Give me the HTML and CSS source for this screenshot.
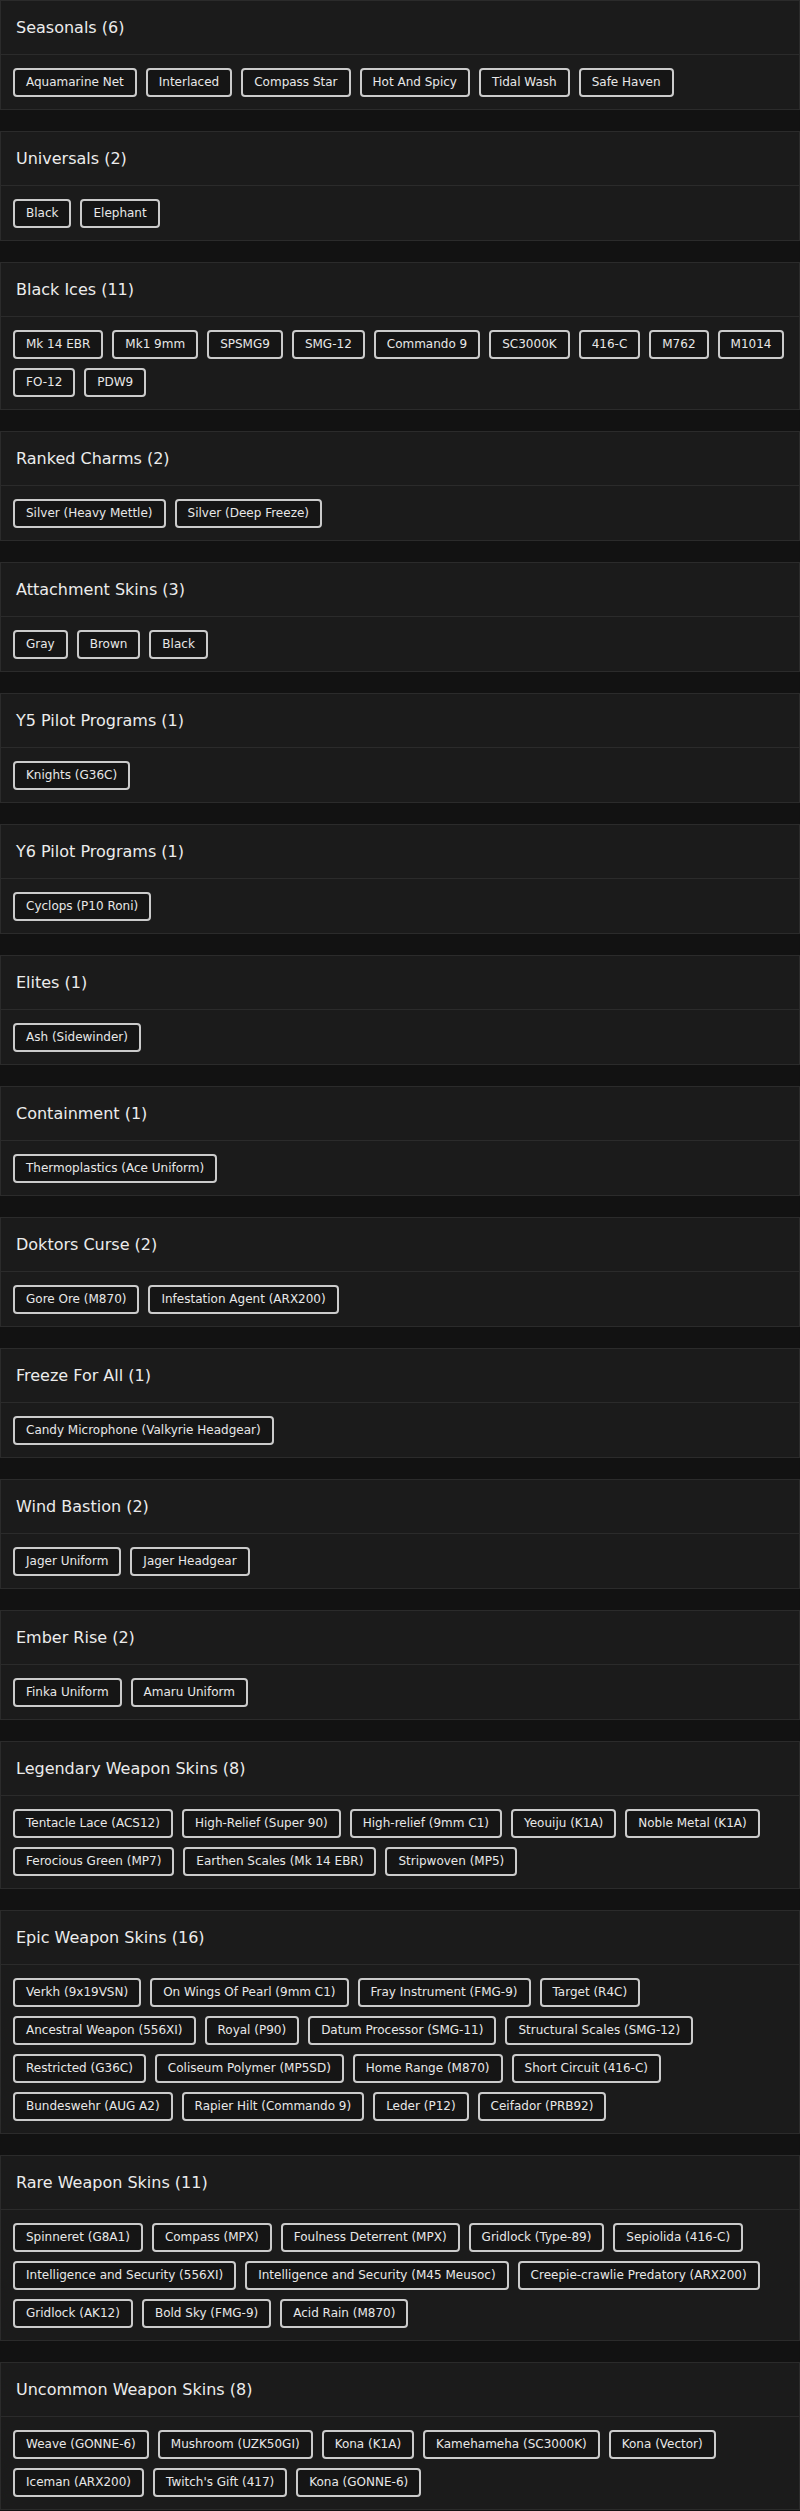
FILE: index.html
```html
<!DOCTYPE html>
<html>
<head>
<meta charset="utf-8">
<link rel="stylesheet" href="styles.css">
</head>
<body>
<div class="list">
  <section class="card"><div class="card-head">Seasonals (6)</div><div class="card-body">
    <span class="chip">Aquamarine Net</span><span class="chip">Interlaced</span><span class="chip">Compass Star</span><span class="chip">Hot And Spicy</span><span class="chip">Tidal Wash</span><span class="chip">Safe Haven</span>
  </div></section>
  <section class="card"><div class="card-head">Universals (2)</div><div class="card-body">
    <span class="chip">Black</span><span class="chip">Elephant</span>
  </div></section>
  <section class="card"><div class="card-head">Black Ices (11)</div><div class="card-body">
    <span class="chip">Mk 14 EBR</span><span class="chip">Mk1 9mm</span><span class="chip">SPSMG9</span><span class="chip">SMG-12</span><span class="chip">Commando 9</span><span class="chip">SC3000K</span><span class="chip">416-C</span><span class="chip">M762</span><span class="chip">M1014</span><span class="chip">FO-12</span><span class="chip">PDW9</span>
  </div></section>
  <section class="card"><div class="card-head">Ranked Charms (2)</div><div class="card-body">
    <span class="chip">Silver (Heavy Mettle)</span><span class="chip">Silver (Deep Freeze)</span>
  </div></section>
  <section class="card"><div class="card-head">Attachment Skins (3)</div><div class="card-body">
    <span class="chip">Gray</span><span class="chip">Brown</span><span class="chip">Black</span>
  </div></section>
  <section class="card"><div class="card-head">Y5 Pilot Programs (1)</div><div class="card-body">
    <span class="chip">Knights (G36C)</span>
  </div></section>
  <section class="card"><div class="card-head">Y6 Pilot Programs (1)</div><div class="card-body">
    <span class="chip">Cyclops (P10 Roni)</span>
  </div></section>
  <section class="card"><div class="card-head">Elites (1)</div><div class="card-body">
    <span class="chip">Ash (Sidewinder)</span>
  </div></section>
  <section class="card"><div class="card-head">Containment (1)</div><div class="card-body">
    <span class="chip">Thermoplastics (Ace Uniform)</span>
  </div></section>
  <section class="card"><div class="card-head">Doktors Curse (2)</div><div class="card-body">
    <span class="chip">Gore Ore (M870)</span><span class="chip">Infestation Agent (ARX200)</span>
  </div></section>
  <section class="card"><div class="card-head">Freeze For All (1)</div><div class="card-body">
    <span class="chip">Candy Microphone (Valkyrie Headgear)</span>
  </div></section>
  <section class="card"><div class="card-head">Wind Bastion (2)</div><div class="card-body">
    <span class="chip">Jager Uniform</span><span class="chip">Jager Headgear</span>
  </div></section>
  <section class="card"><div class="card-head">Ember Rise (2)</div><div class="card-body">
    <span class="chip">Finka Uniform</span><span class="chip">Amaru Uniform</span>
  </div></section>
  <section class="card"><div class="card-head">Legendary Weapon Skins (8)</div><div class="card-body">
    <span class="chip">Tentacle Lace (ACS12)</span><span class="chip">High-Relief (Super 90)</span><span class="chip">High-relief (9mm C1)</span><span class="chip">Yeouiju (K1A)</span><span class="chip">Noble Metal (K1A)</span><span class="chip">Ferocious Green (MP7)</span><span class="chip">Earthen Scales (Mk 14 EBR)</span><span class="chip">Stripwoven (MP5)</span>
  </div></section>
  <section class="card"><div class="card-head">Epic Weapon Skins (16)</div><div class="card-body">
    <span class="chip">Verkh (9x19VSN)</span><span class="chip">On Wings Of Pearl (9mm C1)</span><span class="chip">Fray Instrument (FMG-9)</span><span class="chip">Target (R4C)</span><span class="chip">Ancestral Weapon (556XI)</span><span class="chip">Royal (P90)</span><span class="chip">Datum Processor (SMG-11)</span><span class="chip">Structural Scales (SMG-12)</span><span class="chip">Restricted (G36C)</span><span class="chip">Coliseum Polymer (MP5SD)</span><span class="chip">Home Range (M870)</span><span class="chip">Short Circuit (416-C)</span><span class="chip">Bundeswehr (AUG A2)</span><span class="chip">Rapier Hilt (Commando 9)</span><span class="chip">Leder (P12)</span><span class="chip">Ceifador (PRB92)</span>
  </div></section>
  <section class="card"><div class="card-head">Rare Weapon Skins (11)</div><div class="card-body">
    <span class="chip">Spinneret (G8A1)</span><span class="chip">Compass (MPX)</span><span class="chip">Foulness Deterrent (MPX)</span><span class="chip">Gridlock (Type-89)</span><span class="chip">Sepiolida (416-C)</span><span class="chip">Intelligence and Security (556XI)</span><span class="chip">Intelligence and Security (M45 Meusoc)</span><span class="chip">Creepie-crawlie Predatory (ARX200)</span><span class="chip">Gridlock (AK12)</span><span class="chip">Bold Sky (FMG-9)</span><span class="chip">Acid Rain (M870)</span>
  </div></section>
  <section class="card"><div class="card-head">Uncommon Weapon Skins (8)</div><div class="card-body">
    <span class="chip">Weave (GONNE-6)</span><span class="chip">Mushroom (UZK50GI)</span><span class="chip">Kona (K1A)</span><span class="chip">Kamehameha (SC3000K)</span><span class="chip">Kona (Vector)</span><span class="chip">Iceman (ARX200)</span><span class="chip">Twitch's Gift (417)</span><span class="chip">Kona (GONNE-6)</span>
  </div></section>
</div>
</body>
</html>
```
FILE: styles.css
```css
html, body {
  margin: 0;
  padding: 0;
  background: #121212;
}
body {
  font-family: "DejaVu Sans", "Liberation Sans", sans-serif;
  color: #e4e4e4;
}
.list {
  display: flex;
  flex-direction: column;
  gap: 21px;
}
.card {
  background: #1b1b1b;
  border: 1px solid #2b2b2b;
}
.card-head {
  height: 53px;
  display: flex;
  align-items: center;
  padding: 0 15px;
  font-size: 16px;
  color: #ececec;
  border-bottom: 1px solid #2b2b2b;
}
.card-body {
  display: flex;
  flex-wrap: wrap;
  gap: 9px;
  padding: 13px 12px 12px 12px;
}
.chip {
  display: inline-block;
  height: 29px;
  box-sizing: border-box;
  padding: 0 11px;
  line-height: 25px;
  font-size: 12px;
  color: #e8e8e8;
  background: #151515;
  border: 2px solid #cbcbcb;
  border-radius: 4px;
  white-space: nowrap;
}
```
